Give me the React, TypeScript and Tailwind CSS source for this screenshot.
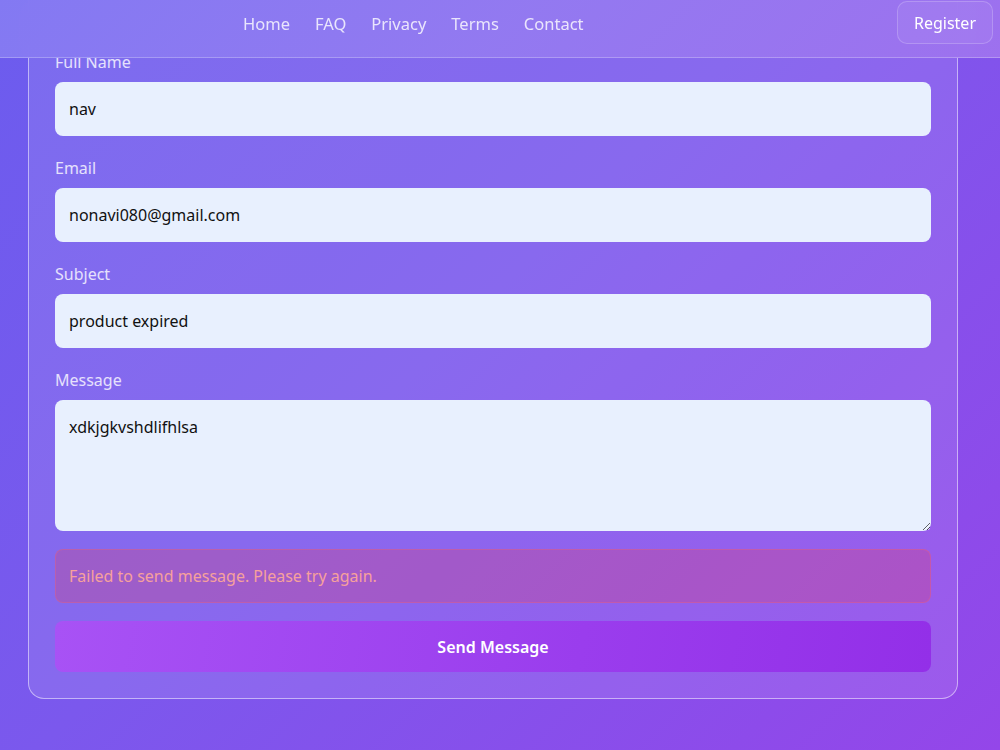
import React from "react";

const font = { fontFamily: '"Noto Sans", "Open Sans", sans-serif' };

function Field({ label, value }: { label: string; value: string }) {
  return (
    <div className="flex flex-col">
      <label className="mb-[8px] text-[16px] leading-[24px] text-white/80">{label}</label>
      <input
        readOnly
        value={value}
        className="h-[54px] w-full rounded-[8px] bg-[#e8f0fe] px-[14px] text-[16px] text-[#111] outline-none"
      />
    </div>
  );
}

export default function App() {
  return (
    <div
      style={font}
      className="relative h-[750px] w-[1000px] overflow-hidden bg-[linear-gradient(135deg,#6c5cee_0%,#7b58ed_45%,#9446e9_100%)]"
    >
      <main className="flex flex-col px-[28px] pr-[42px]">
        <div className="-mt-[41px] rounded-[16px] border border-white/50 bg-white/10 px-[26px] pb-[26px] pt-[90px]">
          <div className="flex flex-col gap-[20px]">
            <Field label="Full Name" value="nav" />
            <Field label="Email" value="nonavi080@gmail.com" />
            <Field label="Subject" value="product expired" />
            <div className="flex flex-col">
              <label className="mb-[8px] text-[16px] leading-[24px] text-white/80">Message</label>
              <textarea
                readOnly
                value="xdkjgkvshdlifhlsa"
                className="block h-[131px] w-full rounded-[8px] bg-[#e8f0fe] px-[14px] py-[15px] text-[16px] leading-[24px] text-[#111] outline-none"
              />
            </div>
          </div>
          <div className="mt-[18px] flex h-[54px] items-center rounded-[8px] border border-red-400/30 bg-red-500/20 px-[13px] text-[16px] text-[#f6a19c]">
            Failed to send message. Please try again.
          </div>
          <button className="mt-[18px] flex h-[51px] w-full items-center justify-center rounded-[8px] bg-[linear-gradient(100deg,#a852f5_0%,#9a3ded_60%,#932fe8_100%)] text-[16px] font-semibold text-white">
            Send Message
          </button>
        </div>
      </main>

      <nav className="absolute inset-x-0 top-0 flex h-[58px] items-start border-b border-white/25 bg-[linear-gradient(135deg,rgba(132,122,242,0.97)_0%,rgba(147,122,240,0.97)_50%,rgba(158,114,238,0.97)_100%)] backdrop-blur-md">
        <div className="ml-[243px] flex h-[48px] items-center gap-[25px] text-[16.5px] text-white/80">
          <span>Home</span>
          <span>FAQ</span>
          <span>Privacy</span>
          <span>Terms</span>
          <span>Contact</span>
        </div>
        <button className="ml-auto mr-[7px] mt-[1px] flex h-[43px] w-[96px] items-center justify-center rounded-[10px] border border-white/20 bg-white/5 text-[16px] text-white">
          Register
        </button>
      </nav>
    </div>
  );
}
